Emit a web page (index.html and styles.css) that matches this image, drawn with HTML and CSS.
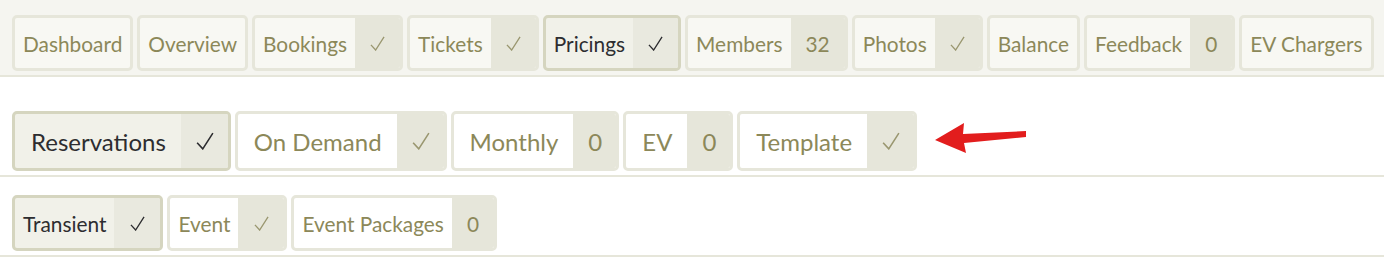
FILE: index.html
```html
<!DOCTYPE html>
<html>
<head>
<meta charset="utf-8">
<link rel="stylesheet" href="styles.css">
</head>
<body>
<nav class="bar bar-main">
  <a class="tab"><span class="label">Dashboard</span></a>
  <a class="tab"><span class="label">Overview</span></a>
  <a class="tab"><span class="label">Bookings</span><span class="badge"><svg class="check" viewBox="0 0 16 16"><path d="M1 9.5 L6 15 L15 1"/></svg></span></a>
  <a class="tab"><span class="label">Tickets</span><span class="badge"><svg class="check" viewBox="0 0 16 16"><path d="M1 9.5 L6 15 L15 1"/></svg></span></a>
  <a class="tab active"><span class="label">Pricings</span><span class="badge"><svg class="check" viewBox="0 0 16 16"><path d="M1 9.5 L6 15 L15 1"/></svg></span></a>
  <a class="tab"><span class="label">Members</span><span class="badge">32</span></a>
  <a class="tab"><span class="label">Photos</span><span class="badge"><svg class="check" viewBox="0 0 16 16"><path d="M1 9.5 L6 15 L15 1"/></svg></span></a>
  <a class="tab"><span class="label">Balance</span></a>
  <a class="tab"><span class="label">Feedback</span><span class="badge">0</span></a>
  <a class="tab"><span class="label">EV Chargers</span></a>
</nav>
<nav class="bar bar-sub">
  <a class="tab active"><span class="label">Reservations</span><span class="badge"><svg class="check" viewBox="0 0 16 16"><path d="M1 9.5 L6 15 L15 1"/></svg></span></a>
  <a class="tab"><span class="label">On Demand</span><span class="badge"><svg class="check" viewBox="0 0 16 16"><path d="M1 9.5 L6 15 L15 1"/></svg></span></a>
  <a class="tab"><span class="label">Monthly</span><span class="badge">0</span></a>
  <a class="tab"><span class="label">EV</span><span class="badge">0</span></a>
  <a class="tab"><span class="label">Template</span><span class="badge"><svg class="check" viewBox="0 0 16 16"><path d="M1 9.5 L6 15 L15 1"/></svg></span></a>
  <svg class="arrow" width="96" height="36" viewBox="0 0 96 36">
    <polygon points="3,20 32,3 31,14 94,11 94,17 32,23 34,33" fill="#e21d1d"/>
  </svg>
</nav>
<nav class="bar bar-third">
  <a class="tab active"><span class="label">Transient</span><span class="badge"><svg class="check" viewBox="0 0 16 16"><path d="M1 9.5 L6 15 L15 1"/></svg></span></a>
  <a class="tab"><span class="label">Event</span><span class="badge"><svg class="check" viewBox="0 0 16 16"><path d="M1 9.5 L6 15 L15 1"/></svg></span></a>
  <a class="tab"><span class="label">Event Packages</span><span class="badge">0</span></a>
</nav>
</body>
</html>
```
FILE: styles.css
```css
html, body {
  margin: 0;
  padding: 0;
  background: #ffffff;
  font-family: Lato, "Open Sans", sans-serif;
}
.bar {
  display: flex;
  align-items: center;
  gap: 4px;
  padding: 0 12px;
  border-bottom: 2px solid #e6e6da;
}
.bar-main {
  background: #f5f5f0;
  padding-top: 15px;
  padding-bottom: 4px;
}
.bar-sub {
  padding-top: 34px;
  padding-bottom: 4px;
}
.bar-third {
  padding-top: 18px;
  padding-bottom: 4px;
}
.tab {
  display: flex;
  flex-shrink: 0;
  align-items: stretch;
  height: 50px;
  border: 3px solid #e6e6da;
  border-radius: 5px;
  background: #f8f8f3;
  color: #8c8859;
  font-size: 20.85px;
  white-space: nowrap;
  overflow: hidden;
  cursor: pointer;
}
.bar-sub .tab, .bar-third .tab {
  background: #ffffff;
}
.label {
  display: flex;
  align-items: center;
  padding: 0 8px;
}
.badge {
  display: flex;
  align-items: center;
  justify-content: center;
  padding: 0 15px;
  background: #e6e6da;
  color: #8c8859;
}
.check {
  width: 15px;
  height: 15px;
  fill: none;
  stroke: #9a9770;
  stroke-width: 1.4;
}
.tab.active {
  border-color: #d5d5bf;
  background: #f1f1e9;
  color: #2d2d30;
}
.tab.active .badge {
  background: #e9e9df;
}
.tab.active .check {
  stroke: #2d2d30;
}
.bar-sub .tab {
  height: 54px;
  font-size: 24px;
}
.bar-sub .label {
  padding: 0 15px 0 16px;
}
.bar-sub .badge {
  padding: 0 14px 0 15px;
}
.bar-sub .check {
  width: 18px;
  height: 18px;
}
.bar-third .tab {
  font-size: 20.85px;
}
.bar-third .check {
  margin: 0 0.5px;
}
.arrow {
  flex-shrink: 0;
  align-self: flex-start;
  margin-top: 9px;
  margin-left: 11px;
}
```
